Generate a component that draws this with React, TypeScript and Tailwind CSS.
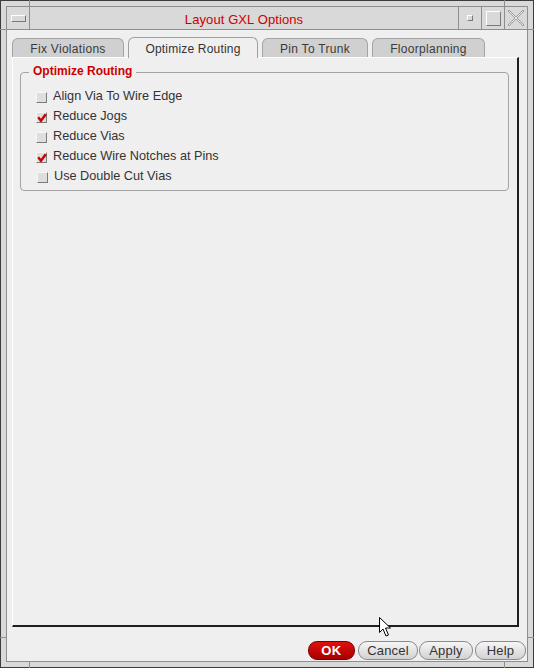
import React from "react";

const options = [
  { label: "Align Via To Wire Edge", checked: false },
  { label: "Reduce Jogs", checked: true },
  { label: "Reduce Vias", checked: false },
  { label: "Reduce Wire Notches at Pins", checked: true },
  { label: "Use Double Cut Vias", checked: false, nudge: true },
];

const tabs = [
  { label: "Fix Violations", w: "w-[112px]", active: false },
  { label: "Optimize Routing", w: "w-[130px]", active: true },
  { label: "Pin To Trunk", w: "w-[106px]", active: false },
  { label: "Floorplanning", w: "w-[113px]", active: false },
];

function CheckBox({ checked }: { checked: boolean }) {
  return (
    <span className="relative block h-[11px] w-[11px] border border-t-[#f6f6f6] border-l-[#f6f6f6] border-r-[#7a7a7a] border-b-[#7a7a7a] bg-[#dedede]">
      {checked && (
        <svg className="absolute left-[0px] top-[0px]" width="10" height="10" viewBox="0 0 10 10">
          <path d="M1.2 4.2 L4 7.8 L8.8 1.2" fill="none" stroke="#cc0000" strokeWidth="2.4" />
        </svg>
      )}
    </span>
  );
}

function TitleBar() {
  return (
    <div className="flex h-[23px] shrink-0 border-b border-[#8e8e8e] bg-[#d9d9d9]">
      <div className="flex w-[23px] items-center justify-center border-r border-[#8e8e8e]">
        <span className="mt-[1px] block h-[7px] w-[15px] border border-t-white border-l-white border-r-[#7a7a7a] border-b-[#7a7a7a]" />
      </div>
      <div className="flex flex-1 items-center justify-center pt-[3px] text-[13px] tracking-[0.1px] text-[#cc0000]">
        Layout GXL Options
      </div>
      <div className="flex w-[23px] items-center justify-center border-l border-[#8e8e8e]">
        <span className="block h-[6px] w-[6px] border border-t-white border-l-white border-r-[#7a7a7a] border-b-[#7a7a7a]" />
      </div>
      <div className="flex w-[23px] items-center justify-center border-l border-[#8e8e8e]">
        <span className="block h-[15px] w-[15px] border border-t-white border-l-white border-r-[#7a7a7a] border-b-[#7a7a7a]" />
      </div>
      <div className="flex w-[23px] items-center justify-center border-l border-[#8e8e8e]">
        <svg width="18" height="18" viewBox="0 0 18 18">
          <path d="M2 1 L9 8 L16 1 L17 2 L10 9 L17 16 L16 17 L9 10 L2 17 L1 16 L8 9 L1 2 Z" fill="#ececec" stroke="#8a8a8a" strokeWidth="0.8" />
        </svg>
      </div>
    </div>
  );
}

export default function App() {
  return (
    <div className="relative h-[668px] w-[534px] border border-[#3c3c3c] bg-[#d9d9d9] p-[5px] font-['Liberation_Sans',Arial,sans-serif] text-[#333]">
      {/* resize handle grooves in the frame */}
      <span className="absolute left-[28px] top-[-1px] h-[7px] w-[1px] bg-[#8e8e8e]" />
      <span className="absolute left-[-1px] top-[28px] h-[1px] w-[7px] bg-[#8e8e8e]" />
      <span className="absolute left-[503px] top-[-1px] h-[7px] w-[1px] bg-[#8e8e8e]" />
      <span className="absolute right-[-1px] top-[28px] h-[1px] w-[7px] bg-[#8e8e8e]" />
      <span className="absolute left-[-1px] top-[636px] h-[1px] w-[7px] bg-[#8e8e8e]" />
      <span className="absolute bottom-[-1px] left-[28px] h-[7px] w-[1px] bg-[#8e8e8e]" />
      <span className="absolute right-[-1px] top-[636px] h-[1px] w-[7px] bg-[#8e8e8e]" />
      <span className="absolute bottom-[-1px] left-[503px] h-[7px] w-[1px] bg-[#8e8e8e]" />

      <div className="flex h-full flex-col border border-[#8e8e8e] bg-[#efefef]">
        <TitleBar />

        <div className="flex flex-1 flex-col pl-[5px] pr-[8px] pt-[7px]">
          <div className="flex h-[20px] items-end gap-[4px]">
            {tabs.map((t) =>
              t.active ? (
                <div
                  key={t.label}
                  className={`${t.w} relative z-10 mb-[-1px] flex h-[21px] items-center justify-center rounded-t-[6px] border border-b-0 border-[#a0a0a0] bg-[#efefef] pt-[1px] text-[12px] tracking-[0.2px]`}
                >
                  {t.label}
                </div>
              ) : (
                <div
                  key={t.label}
                  className={`${t.w} flex h-[19px] items-center justify-center rounded-t-[6px] border border-b-0 border-[#a4a4a4] bg-[#d0d0d0] pt-[2px] text-[12px] tracking-[0.3px] text-[#3a3a3a]`}
                >
                  {t.label}
                </div>
              )
            )}
          </div>

          <div className="flex-1 border-b-2 border-l border-r-2 border-t border-b-[#1e1e1e] border-l-white border-r-[#1e1e1e] border-t-white pl-[7px] pt-[14px]">
            <div className="relative w-[489px] rounded-[4px] border border-[#a3a3a3] pb-[3px] pl-[15px] pt-[14px]">
              <span className="absolute left-[8px] top-[-9px] bg-[#efefef] px-[4px] text-[12px] font-bold leading-[14px] text-[#cc0000]">
                Optimize Routing
              </span>
              {options.map((o) => (
                <div key={o.label} className={`flex h-[20px] items-center gap-[6px] ${o.nudge ? "pl-[1px]" : ""}`}>
                  <CheckBox checked={o.checked} />
                  <span className="text-[12.7px] text-[#333]">{o.label}</span>
                </div>
              ))}
            </div>
          </div>
        </div>

        <div className="mb-[1px] mt-[14px] flex h-[19px] shrink-0 justify-end pr-[1px]">
          <button className="w-[47px] rounded-[9px] border border-[#7a0000] bg-gradient-to-b from-[#e01010] to-[#a80000] text-[13px] font-bold leading-none tracking-[0.5px] text-white">
            OK
          </button>
          <button className="ml-[3px] w-[60px] rounded-[9px] border border-[#8a8a8a] bg-gradient-to-b from-[#f6f6f6] to-[#d2d2d2] text-[13px] leading-none tracking-[0.2px] text-[#333]">
            Cancel
          </button>
          <button className="ml-[1px] w-[54px] rounded-[9px] border border-[#8a8a8a] bg-gradient-to-b from-[#f6f6f6] to-[#d2d2d2] text-[13px] leading-none tracking-[0.2px] text-[#333]">
            Apply
          </button>
          <button className="ml-[2px] w-[51px] rounded-[9px] border border-[#8a8a8a] bg-gradient-to-b from-[#f6f6f6] to-[#d2d2d2] text-[13px] leading-none tracking-[0.2px] text-[#333]">
            Help
          </button>
        </div>
      </div>

      {/* mouse pointer */}
      <svg className="absolute left-[378px] top-[616px]" width="14" height="21" viewBox="0 0 14 21">
        <path d="M0.5 0.5 L0.5 15.5 L4 12 L7 19 L9.5 18 L6.5 11 L11.5 11 Z" fill="white" stroke="black" strokeWidth="1" />
      </svg>
    </div>
  );
}
